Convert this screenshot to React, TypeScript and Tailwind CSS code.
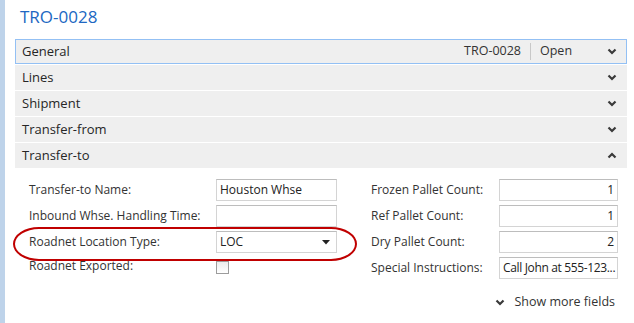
import React from 'react';

const Chevron = ({ up = false }: { up?: boolean }) => (
  <svg width="10" height="7" viewBox="0 0 10 7" className="block">
    <polyline
      points={up ? '1.5,5.5 5,2 8.5,5.5' : '1.5,1.5 5,5 8.5,1.5'}
      fill="none"
      stroke="#3a3a3a"
      strokeWidth="2.2"
    />
  </svg>
);

const sections = ['Lines', 'Shipment', 'Transfer-from'];

const Field = ({ value = '', right = false, tight = false }: { value?: string; right?: boolean; tight?: boolean }) => (
  <div
    className={`h-[22px] border border-[#d4d4d4] border-t-[#bdbdbd] bg-white px-[3px] text-[12px] leading-[20px] text-[#222] whitespace-nowrap overflow-hidden ${
      right ? 'text-right' : ''
    } ${tight ? 'tracking-[-0.35px]' : ''}`}
  >
    {value}
  </div>
);

export default function App() {
  const left = [
    { label: 'Transfer-to Name:', value: 'Houston Whse' },
    { label: 'Inbound Whse. Handling Time:', value: '' },
  ];
  const right = [
    { label: 'Frozen Pallet Count:', value: '1' },
    { label: 'Ref Pallet Count:', value: '1' },
    { label: 'Dry Pallet Count:', value: '2' },
  ];

  return (
    <div className="flex w-[634px] h-[323px] bg-white font-['Open_Sans',sans-serif] text-[#262626] overflow-hidden">
      <div className="w-[5px] shrink-0 bg-[#bed3ea]" />
      <div className="flex-1 pl-[10px] pr-[7px]">
        {/* Title */}
        <div className="h-[39px] pl-[5px] pt-[5px] text-[17px] leading-[24px] text-[#2067c2]">TRO-0028</div>

        {/* FastTab headers */}
        <div className="flex h-[25px] items-center border border-[#93c0f4] bg-[#efefef] pl-[6px] pr-[9px] text-[13px]">
          <span className="flex-1">General</span>
          <span className="text-[12.5px] text-[#333]">TRO-0028</span>
          <span className="mx-[9px] h-[17px] w-px bg-[#c8c8c8]" />
          <span className="w-[67px] text-[12.5px] text-[#333]">Open</span>
          <Chevron />
        </div>
        {sections.map((s) => (
          <div key={s} className="mt-px flex h-[25px] items-center bg-[#efefef] pl-[7px] pr-[10px] text-[13px]">
            <span className="flex-1">{s}</span>
            <Chevron />
          </div>
        ))}
        <div className="mt-px flex h-[25px] items-center bg-[#efefef] pl-[7px] pr-[10px] text-[13px]">
          <span className="flex-1">Transfer-to</span>
          <Chevron up />
        </div>

        {/* Fields */}
        <div className="relative mt-[11px] flex text-[12px] text-[#333] whitespace-nowrap">
          <div className="flex w-[322px] shrink-0 flex-col gap-[4px] pl-[14px]">
            {left.map((f) => (
              <div key={f.label} className="flex items-center">
                <span className="w-[187px] shrink-0">{f.label}</span>
                <div className="w-[121px]">
                  <Field value={f.value} />
                </div>
              </div>
            ))}
            <div className="flex items-center">
              <span className="w-[187px] shrink-0">Roadnet Location Type:</span>
              <div className="flex h-[22px] w-[121px] items-center justify-between border border-[#d4d4d4] border-t-[#bdbdbd] bg-white pl-[3px] pr-[6px] text-[#222]">
                <span>LOC</span>
                <svg width="8" height="5" viewBox="0 0 8 5">
                  <polygon points="0,0 8,0 4,4.5" fill="#222" />
                </svg>
              </div>
            </div>
            <div className="flex h-[22px] items-start">
              <span className="w-[187px] shrink-0 leading-[18px]">Roadnet Exported:</span>
              <div className="mt-[4px] h-[13px] w-[13px] border border-[#9c9c9c] bg-gradient-to-b from-[#ececec] to-white" />
            </div>
          </div>

          <div className="flex flex-1 flex-col gap-[4px] pl-[34px]">
            {right.map((f) => (
              <div key={f.label} className="flex items-center">
                <span className="w-[128px] shrink-0">{f.label}</span>
                <div className="w-[119px] shrink-0">
                  <Field value={f.value} right />
                </div>
              </div>
            ))}
            <div className="flex items-center">
              <span className="w-[128px] shrink-0">Special Instructions:</span>
              <div className="w-[119px] shrink-0">
                <Field value="Call John at 555-123..." tight />
              </div>
            </div>
          </div>

          {/* Red annotation */}
          <div className="pointer-events-none absolute left-[-2px] top-[48px] h-[34px] w-[344px] rounded-[26px_/_17px] border-2 border-[#c00000]" />
        </div>

        <div className="mt-[14px] flex items-center justify-end gap-[9px] pr-[12px] text-[12.5px] text-[#333] whitespace-nowrap">
          <Chevron />
          <span>Show more fields</span>
        </div>
      </div>
    </div>
  );
}
